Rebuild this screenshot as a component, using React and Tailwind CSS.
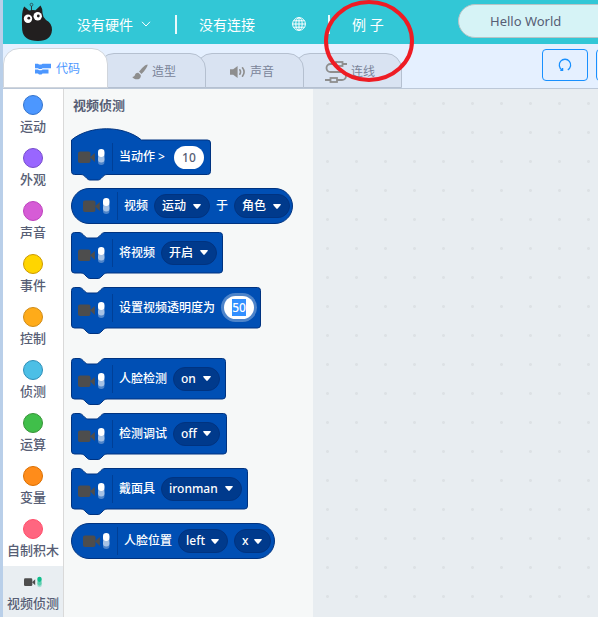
import { useEffect, useRef } from "react";

const CATEGORIES = [
  { name: "运动", color: "bg-[#4c97ff] border-[#3373cc]" },
  { name: "外观", color: "bg-[#9966ff] border-[#774dcb]" },
  { name: "声音", color: "bg-[#d65cd6] border-[#bd42bd]" },
  { name: "事件", color: "bg-[#ffd500] border-[#cc9900]" },
  { name: "控制", color: "bg-[#ffab19] border-[#cf8b17]" },
  { name: "侦测", color: "bg-[#4cbfe6] border-[#2e8eb8]" },
  { name: "运算", color: "bg-[#40bf4a] border-[#389438]" },
  { name: "变量", color: "bg-[#ff8c1a] border-[#db6e00]" },
  { name: "自制积木", color: "bg-[#ff6680] border-[#ff4d6a]" },
];

function Logo() {
  return (
    <svg viewBox="0 0 32 40" className="h-10 w-8 shrink-0" aria-label="Kittenblock" role="img">
      <circle cx="10.500" cy="2.700" r="1.400" fill="none" stroke="#2a5a62" />
      <path d="M10.500 4v5" stroke="#2a3a3e" />
      <path
        d="M3.200 4.500 L8 8.500 Q11 7.700 14.500 8.200 L19.500 3.500 Q21.500 6 21.500 11 Q21.700 15 25 18 Q31 21 31 28 Q30 39 17 39 Q2.500 39 1.200 28 Q.8 22 1 15 Q1.200 8 3.200 4.500Z"
        fill="#221f1f"
      />
      <circle cx="7" cy="16.700" r="4.200" fill="#fff" />
      <circle cx="16.700" cy="14.300" r="4.200" fill="#fff" />
      <circle cx="7.800" cy="16.200" r="1.400" fill="#221f1f" />
      <circle cx="17.300" cy="14" r="1.400" fill="#221f1f" />
    </svg>
  );
}

function GlobeIcon() {
  return (
    <svg viewBox="0 0 14 14" className="size-[14px]" fill="none" stroke="#fff" strokeWidth="1">
      <circle cx="7" cy="7" r="6.400" />
      <ellipse cx="7" cy="7" rx="3.200" ry="6.400" />
      <path d="M7 .6v12.800M.6 7h12.800M1.600 3.800h10.800M1.600 10.200h10.800" />
    </svg>
  );
}

function CodeIcon() {
  return (
    <svg viewBox="0 0 16 12" className="h-3 w-4" fill="#4c97ff">
      <path d="M0 .8h3l1 .8h2.500l1-.8H16v4.400H7.500l-1 .8H4l-1-.8H0z" />
      <path d="M0 6.400h3l1 .8h2.500l1-.8H13.500v4H7.500l-1 1H4l-1-1H0z" />
    </svg>
  );
}

function BrushIcon() {
  return (
    <svg viewBox="0 0 16 16" className="size-4" fill="#8e8e8e">
      <path d="M15.600.4c-1.800 0-5.400 2.800-8.600 7.200l2.400 2.300C13 6.600 15.600 2.500 15.600.4z" />
      <path d="M6.300 8.700c-1.500-.2-2.900.6-3.300 2-.4 1.500-1.200 2.100-2.700 2.200 1.500 2.400 5.300 3.200 7.400 1.500 1.300-1.100 1.400-2.600.8-3.600z" />
    </svg>
  );
}

function SpeakerIcon() {
  return (
    <svg viewBox="0 0 16 14" className="h-[14px] w-4" fill="#8e8e8e">
      <path d="M0 4.300h3.200L7.600 1v12L3.200 9.700H0z" />
      <path
        d="M9.800 4.800q1.500 2.200 0 4.400M12.500 2.800q3.200 4.200 0 8.400"
        fill="none"
        stroke="#8e8e8e"
        strokeWidth="1.600"
        strokeLinecap="round"
      />
    </svg>
  );
}

function WiringIcon() {
  return (
    <svg viewBox="0 0 22 22" className="size-[22px]" fill="none" stroke="#8e8e8e" strokeWidth="1.800">
      <path d="M11 3H5.500a4 4 0 0 0 0 8H17a4 4 0 0 1 0 8h-5" />
      <path d="M17 3h5M0 19h6" />
      <rect x="11" y="1" width="6.500" height="4" />
      <rect x="5.500" y="17" width="6.500" height="4" />
    </svg>
  );
}

function ReloadIcon() {
  return (
    <svg viewBox="0 0 14 14" className="size-[14px]" fill="none" stroke="#1890ff" strokeWidth="1.300">
      <path d="M9.800 11.900A5.700 5.700 0 1 0 4 11.800" />
      <path d="M2.300 12.300h2.300V10" />
    </svg>
  );
}

function CameraIcon({ pill = "#ffffff", className = "h-[18px] w-[27px]" }) {
  return (
    <svg viewBox="0 0 27 18" className={className}>
      <rect x="0" y="3.500" width="12.500" height="11.500" rx="2" fill="#4d4d4d" />
      <path d="M12 9.200 16.800 5v9z" fill="#4d4d4d" />
      <rect x="20" y="8" width="6.500" height="9" rx="3.200" fill={pill} opacity=".3" />
      <rect x="20" y="5" width="6.500" height="9.500" rx="3.200" fill={pill} opacity=".5" />
      <rect x="20" y="1" width="6.500" height="8" rx="3.200" fill={pill} />
    </svg>
  );
}

const TAB_BASE = "relative flex items-center justify-center rounded-t-[16px] border text-[12px]";

function Tab({ icon, label, className }) {
  return (
    <button
      type="button"
      role="tab"
      className={`${TAB_BASE} -ml-[10px] h-[35px] w-[108px] gap-1 border-[#b5c0d0] bg-[#d9e3f2] pt-[2px] pl-1 text-[#7a8499] ${className}`}
    >
      {icon}
      {label}
    </button>
  );
}

const NOTCH_TOP = "c2 0 3 1 4 2 l2 2 c1 1 2 1.500 3 1.500 h8 c1 0 2 -.5 3 -1.500 l2 -2 c1 -1 2 -2 4 -2";
const NOTCH_BOTTOM = "c-2 0 -3 1 -4 2 l-2 2 c-1 1 -2 1.500 -3 1.500 h-8 c-1 0 -2 -.5 -3 -1.500 l-2 -2 c-1 -1 -2 -2 -4 -2";

function shapePath(kind, w) {
  const r = w - 0.5;
  if (kind === "reporter") {
    return `M18 .5 H${r - 17.5} a17.500 17.500 0 0 1 0 35 H18 a17.500 17.500 0 0 1 0 -35z`;
  }
  if (kind === "hat") {
    return `M.5 12 c18 -15 52 -15 70 0 H${r - 3} a3 3 0 0 1 3 3 V43.500 a3 3 0 0 1 -3 3 H36 ${NOTCH_BOTTOM} H3.500 a3 3 0 0 1 -3 -3z`;
  }
  return `M.5 3.500 a3 3 0 0 1 3 -3 H8 ${NOTCH_TOP} H${r - 3} a3 3 0 0 1 3 3 V38 a3 3 0 0 1 -3 3 H36 ${NOTCH_BOTTOM} H3.500 a3 3 0 0 1 -3 -3z`;
}

const SHAPES = {
  hat: { height: 52, box: "h-[52px]", row: "h-[34px] mt-[12px] pl-[7px]", icon: "" },
  stack: { height: 47, box: "h-[47px]", row: "h-[41px] pl-[7px]", icon: "pt-[5px]" },
  reporter: { height: 36, box: "h-[36px]", row: "h-[36px] pl-[12px]", icon: "" },
};

function Block({ kind = "stack", width, className = "", children }) {
  const shape = SHAPES[kind];
  return (
    <div className={`grid ${shape.box} ${className}`}>
      <svg
        width={width}
        height={shape.height}
        className="col-start-1 row-start-1 overflow-visible"
        fill="#004fb4"
        stroke="#003380"
      >
        <path d={shapePath(kind, width)} />
      </svg>
      <div
        className={`col-start-1 row-start-1 flex items-center self-start text-[12px] font-medium whitespace-nowrap text-white ${shape.row}`}
      >
        <span className={shape.icon}>
          <CameraIcon />
        </span>
        <span className="mr-[6px] ml-[7px] h-[28px] w-px bg-[#003f96]" />
        <div className="flex items-center gap-[6px]">{children}</div>
      </div>
    </div>
  );
}

function Menu({ value, label, className }) {
  return (
    <span className={`grid h-6 items-center ${className}`}>
      <select
        aria-label={label}
        defaultValue={value}
        className="col-start-1 row-start-1 h-6 w-full appearance-none rounded-full border border-[#003380] bg-[#003a8c] pl-[7px] text-[12px] text-white outline-none"
      >
        <option>{value}</option>
      </select>
      <svg
        viewBox="0 0 8 5"
        className="pointer-events-none col-start-1 row-start-1 mr-[9px] h-[5px] w-2 justify-self-end"
        fill="#fff"
      >
        <path d="M.8 0h6.400q1 .3.500 1.100L4.700 4.600q-.7.600-1.400 0L.3 1.100Q-.2.300.8 0z" />
      </svg>
    </span>
  );
}

function Palette() {
  const opacity = useRef(null);
  useEffect(() => {
    opacity.current.focus();
    opacity.current.select();
  }, []);
  return (
    <section className="w-[249px] shrink-0 bg-[#f6f8f8] pl-[7px]">
      <h2 className="mt-[6px] mb-[13px] pl-[2px] text-[13px] leading-5 font-bold text-[#575e75]">视频侦测</h2>
      <div className="flex flex-col gap-2">
        <Block kind="hat" width={140}>
          <label htmlFor="motion">当动作 &gt;</label>
          <input
            id="motion"
            defaultValue="10"
            className="ml-[3px] h-[23px] w-[30px] rounded-full bg-white text-center text-[12px] text-[#575e75] outline-none"
          />
        </Block>
        <Block kind="reporter" width={222}>
          视频
          <Menu value="运动" label="视频属性" className="w-[56px]" />
          于
          <Menu value="角色" label="对象" className="w-[56px]" />
        </Block>
        <Block width={152}>
          将视频
          <Menu value="开启" label="视频状态" className="w-[56px]" />
        </Block>
        <Block width={190}>
          <label htmlFor="opacity">设置视频透明度为</label>
          <input
            id="opacity"
            ref={opacity}
            defaultValue="50"
            className="ml-[3px] h-[23px] w-[30px] rounded-full bg-white text-center text-[12px] text-[#575e75] ring-3 ring-white/30 outline-none selection:bg-[#3390ff] selection:text-white"
          />
        </Block>
        <Block width={155} className="mt-4">
          人脸检测
          <Menu value="on" label="人脸检测" className="w-[47px]" />
        </Block>
        <Block width={156}>
          检测调试
          <Menu value="off" label="检测调试" className="w-[47px]" />
        </Block>
        <Block width={177}>
          戴面具
          <Menu value="ironman" label="面具" className="w-[81px]" />
        </Block>
        <Block kind="reporter" width={204}>
          人脸位置
          <Menu value="left" label="部位" className="w-[50px]" />
          <Menu value="x" label="坐标" className="w-[37px]" />
        </Block>
      </div>
    </section>
  );
}

export default function App() {
  return (
    <div className="relative flex min-h-screen flex-col overflow-hidden border-l-3 border-[#b9cfe9] bg-[#e8edf1] font-['Noto_Sans','Noto_Sans_CJK_SC',sans-serif]">
      <header className="flex h-11 items-center bg-[#32c7d6] pl-[18px] text-[14px] text-white">
        <Logo />
        <button type="button" className="ml-6 flex shrink-0 items-center gap-2 pt-1">
          没有硬件
          <svg viewBox="0 0 10 6" className="h-[6px] w-[10px]" fill="none" stroke="#fff">
            <path d="M1 .8l4 4.200 4-4.200" />
          </svg>
        </button>
        <span className="mt-1 ml-6 h-[19px] w-[2px] shrink-0 bg-white/90" />
        <button type="button" className="ml-[22px] shrink-0 pt-1">没有连接</button>
        <button type="button" aria-label="语言" className="ml-[37px] shrink-0 pt-1">
          <GlobeIcon />
        </button>
        <span className="mt-1 ml-[22px] h-[19px] w-[2px] shrink-0 bg-white/90" />
        <button type="button" className="ml-[22px] shrink-0 pt-1">例 子</button>
        <input
          aria-label="项目名称"
          defaultValue="Hello World"
          className="mb-[3px] ml-auto -mr-6 h-[34px] w-[164px] shrink-0 rounded-full border border-[#b8c4c6] bg-[#d6f3f6] pl-[31px] text-[13px] text-[#575e75] outline-none"
        />
      </header>

      <div className="flex h-[45px] items-end border-b border-[#bcc8d8] bg-[#e5f0ff]">
        <div role="tablist" className="flex items-end">
          <button
            type="button"
            role="tab"
            aria-selected="true"
            className={`${TAB_BASE} z-40 h-10 w-[105px] gap-[5px] border-[#d0d5dc] bg-white pt-[2px] pl-1 text-[#4c97ff]`}
          >
            <CodeIcon />
            代码
          </button>
          <Tab icon={<BrushIcon />} label="造型" className="z-30" />
          <Tab icon={<SpeakerIcon />} label="声音" className="z-20" />
          <Tab icon={<WiringIcon />} label="连线" className="z-10" />
        </div>
        <div className="-mr-10 mb-[7px] ml-auto flex gap-2">
          <button
            type="button"
            aria-label="重置"
            className="flex h-8 w-[46px] items-center justify-center rounded-[4px] border border-[#1890ff]"
          >
            <ReloadIcon />
          </button>
          <button
            type="button"
            aria-label="更多"
            className="h-8 w-[42px] rounded-[4px] border border-[#1890ff]"
          />
        </div>
      </div>

      <main className="flex grow">
        <nav className="w-[61px] shrink-0 border-r border-[#d9d9d9] bg-white text-[13px] font-medium text-[#575e75]">
          {CATEGORIES.map((c) => (
            <button key={c.name} type="button" className="flex h-[53px] w-full flex-col items-center gap-[3px] pt-[6px] leading-4 whitespace-nowrap">
              <span className={`size-5 rounded-full border ${c.color}`} />
              {c.name}
            </button>
          ))}
          <button type="button" className="flex h-[53px] w-full flex-col items-center gap-[3px] bg-[#e9eef2] pt-[6px] leading-4 whitespace-nowrap">
            <span className="flex h-5 items-center">
              <CameraIcon pill="#0fbd8c" className="h-3 w-[18px]" />
            </span>
            视频侦测
          </button>
        </nav>
        <Palette />
        <section
          aria-label="工作区"
          className="grow bg-[radial-gradient(circle,#dde1e5_1px,transparent_2px)] bg-[length:29px_29px]"
        />
      </main>

      <svg
        viewBox="0 0 92 84"
        className="pointer-events-none absolute top-0 left-[320px] z-50 h-[84px] w-[92px]"
        fill="none"
        stroke="#ee1c24"
        strokeWidth="4"
      >
        <ellipse cx="46" cy="41" rx="43" ry="39" />
      </svg>
    </div>
  );
}
